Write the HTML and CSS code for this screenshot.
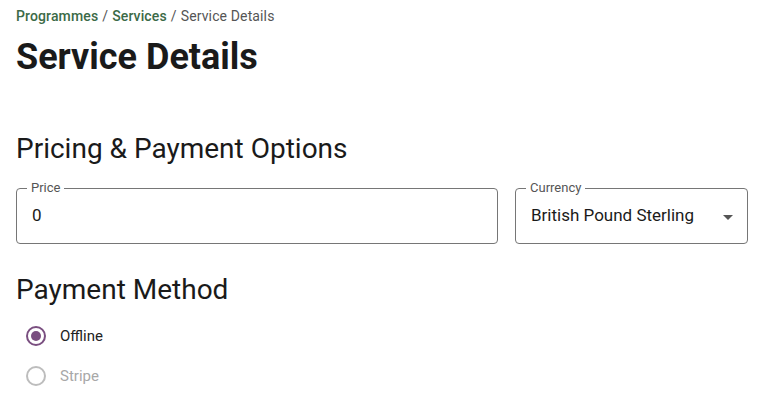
FILE: index.html
```html
<!DOCTYPE html>
<html lang="en">
<head>
<meta charset="utf-8">
<title>Service Details</title>
<link rel="stylesheet" href="styles.css">
</head>
<body>
<div class="page">
  <nav class="crumbs">
    <a class="crumb-link">Programmes</a>
    <span class="sep">/</span>
    <a class="crumb-link">Services</a>
    <span class="sep">/</span>
    <span class="crumb-current">Service Details</span>
  </nav>
  <h1 class="title">Service Details</h1>

  <h2 class="section-title">Pricing &amp; Payment Options</h2>
  <div class="fields">
    <fieldset class="field field-price">
      <legend class="field-label">Price</legend>
      <div class="field-value">0</div>
    </fieldset>
    <fieldset class="field field-currency">
      <legend class="field-label">Currency</legend>
      <div class="field-value">British Pound Sterling</div>
      <svg class="caret" width="24" height="24" viewBox="0 0 24 24"><path d="M7 10l5 5 5-5z" fill="currentColor"/></svg>
    </fieldset>
  </div>

  <h2 class="section-title method-title">Payment Method</h2>
  <div class="radios">
    <label class="radio">
      <span class="radio-circle checked"><span class="radio-dot"></span></span>
      <span class="radio-label">Offline</span>
    </label>
    <label class="radio disabled">
      <span class="radio-circle"></span>
      <span class="radio-label">Stripe</span>
    </label>
  </div>
</div>
</body>
</html>
```
FILE: styles.css
```css
* { box-sizing: border-box; }
html, body { margin: 0; padding: 0; background: #fff; }
body {
  font-family: Roboto, "Noto Sans", Arial, sans-serif;
  color: #1a1a1a;
}
.page {
  padding: 6px 15px 0 16px;
}
.crumbs {
  font-size: 14px;
  letter-spacing: 0.13px;
  line-height: 20px;
  color: #555;
  display: flex;
  gap: 4px;
}
.crumb-link {
  color: #3b6a47;
  font-weight: 500;
}
.sep { color: #555; }
.crumb-current { color: #555; }
.title {
  margin: 8px 0 0 0;
  font-size: 36px;
  line-height: 46px;
  font-weight: 700;
  color: #1a1a1a;
}
.section-title {
  margin: 51px 0 0 0;
  font-size: 28px;
  line-height: 36px;
  font-weight: 400;
  color: #1a1a1a;
}
.fields {
  display: flex;
  gap: 17px;
  margin-top: 15px;
}
.field {
  position: relative;
  margin: 0;
  padding: 0 16px 0 15px;
  border: 1px solid #767676;
  border-radius: 4px;
  height: 62px;
  display: flex;
  align-items: center;
  min-width: 0;
}
.field-price { flex: 1 1 auto; }
.field-currency { flex: 0 0 233px; }
.field-label {
  font-size: 13px;
  line-height: 12px;
  color: #555;
  padding: 0 4px;
  margin-left: -5px;
}
.field-value {
  font-size: 17px;
  color: #1a1a1a;
  margin-top: -7px;
}
.caret {
  position: absolute;
  right: 7px;
  top: 11px;
  color: #555;
}
.method-title { margin-top: 28px; }
.radios {
  display: flex;
  flex-direction: column;
  margin-top: 8px;
}
.radio {
  display: flex;
  align-items: center;
  height: 40px;
  gap: 14px;
  padding-left: 10px;
  font-size: 15px;
}
.radio-circle {
  width: 20px;
  height: 20px;
  border-radius: 50%;
  border: 2px solid #bdbdbd;
  display: flex;
  align-items: center;
  justify-content: center;
}
.radio-circle.checked { border-color: #7a4f80; }
.radio-dot {
  width: 10px;
  height: 10px;
  border-radius: 50%;
  background: #7a4f80;
}
.radio-label { color: #222; }
.radio.disabled .radio-label { color: #a8a8a8; }
```
